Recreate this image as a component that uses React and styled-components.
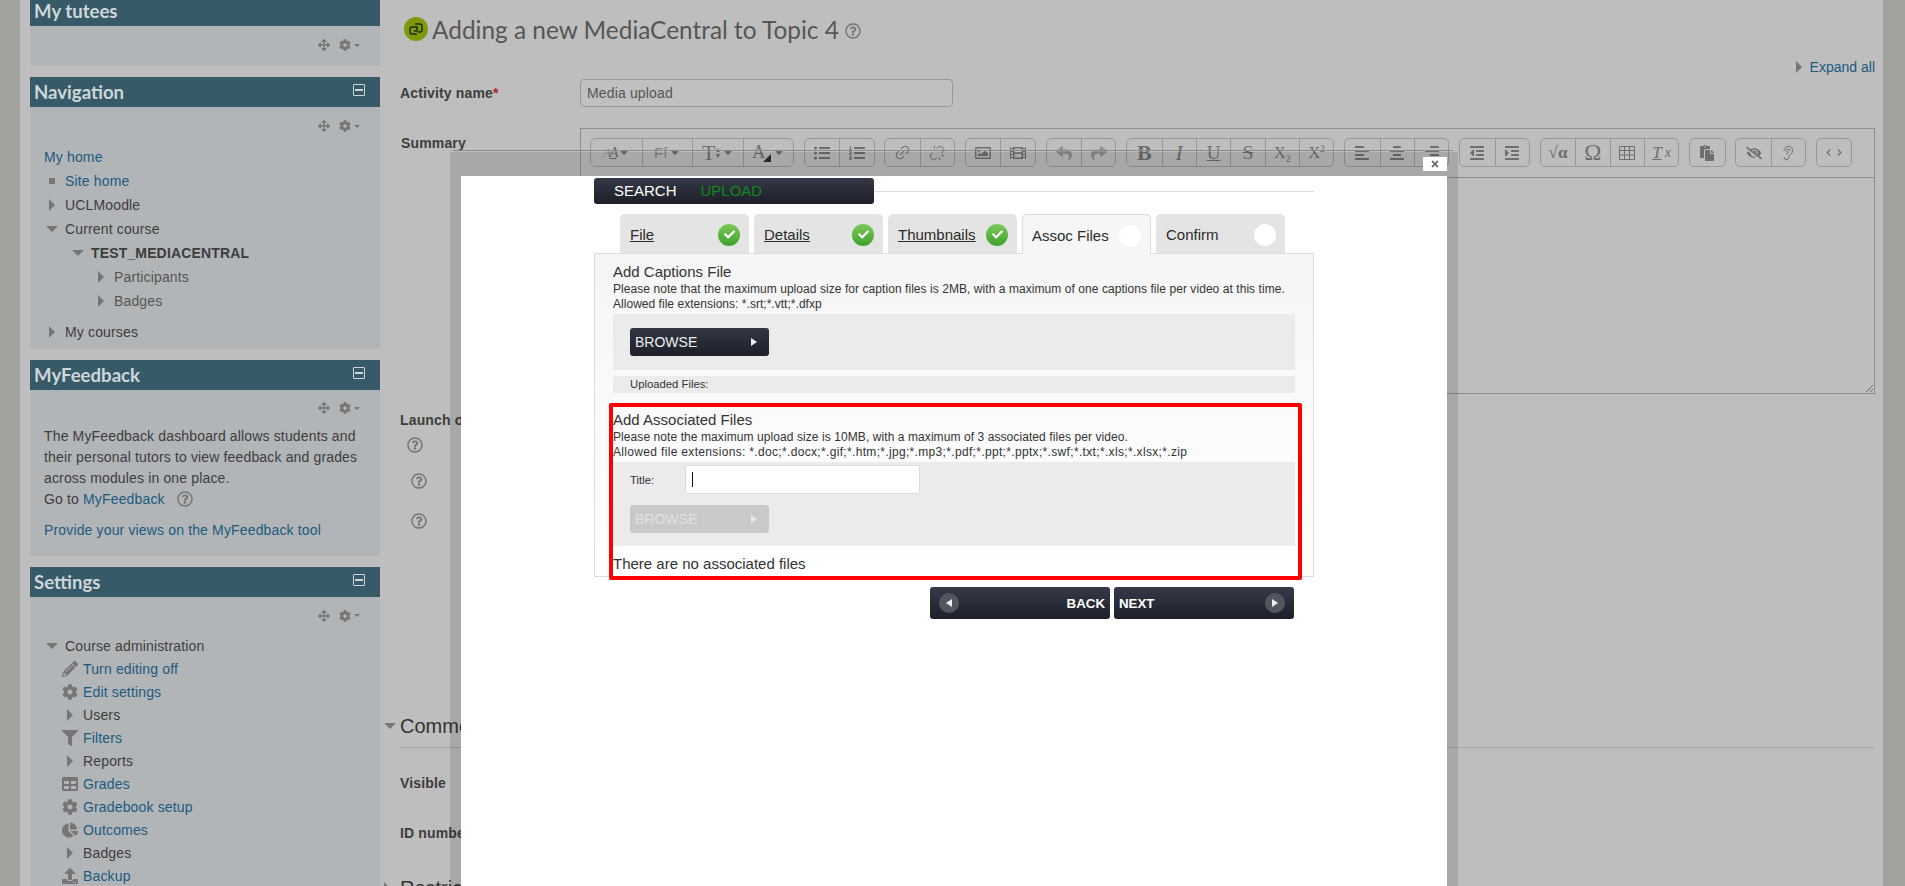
import React from "react";
import styled, { createGlobalStyle } from "styled-components";
import {
  FaArrowsAlt, FaCog, FaPencilAlt, FaFilter, FaTable, FaUpload, FaRegQuestionCircle,
  FaRegImage, FaFilm, FaReply, FaShare, FaListUl, FaListOl, FaAlignLeft,
  FaAlignCenter, FaAlignRight, FaOutdent, FaIndent, FaPaste, FaEyeSlash, FaCheck,
  FaTimes, FaChartPie,
} from "react-icons/fa";
import { Ear, Link2, Unlink, ChevronLeft, ChevronRight } from "lucide-react";

const Global = createGlobalStyle`
  html, body { margin: 0; padding: 0; height: 886px; overflow: hidden; background: #bebebe; }
  * { box-sizing: border-box; }
  body { font-family: "Liberation Sans", Arial, sans-serif; font-size: 14px; letter-spacing: .15px; color: #3d3d3d; }
`;

const Page = styled.div`
  position: relative; display: flex; width: 1905px; height: 886px; overflow: hidden; background: #bebebe;
`;
const Gutter = styled.div`
  flex: 0 0 ${p => p.$w}px; background: #a2a39c;
`;
const Content = styled.div`
  flex: 1; display: flex; padding: 0 8px 0 10px; min-width: 0;
`;
const Sidebar = styled.aside`
  flex: 0 0 350px; margin-top: -4px; display: flex; flex-direction: column; gap: 11px;
`;
const Block = styled.section`background: #b2b5b7; flex: ${p => p.$grow ? 1 : "none"}; height: ${p => p.$h ? p.$h + "px" : "auto"};`;
const BlockHead = styled.header`
  height: ${p => p.$h || 30}px; background: #375a68; color: #cfd6d8; display: flex; align-items: center; justify-content: space-between;
  padding: 0 15px 0 4px; font-family: "Lato", "Open Sans", sans-serif; font-weight: 700; font-size: 18.6px; letter-spacing: 0;
`;
const MinBox = styled.span`
  width: 12px; height: 12px; border: 1px solid #cfd6d8; border-radius: 1px; display: flex; align-items: center; justify-content: center; margin-top: -4px;
  &::after { content: ""; width: 8px; height: 2px; background: #cfd6d8; }
`;
const Controls = styled.div`
  height: ${p => p.$h || 38}px; display: flex; align-items: center; justify-content: flex-end; gap: 9px; padding-right: 20px; color: #767676;
`;
const Caret = styled.span`
  margin-left: -6px; border-left: 3px solid transparent; border-right: 3px solid transparent; border-top: 3px solid #767676;
`;
const TreeRow = styled.div`
  display: flex; align-items: center; height: ${p => p.$h || 24}px; padding-left: ${p => p.$indent}px; font-weight: ${p => p.$bold ? 700 : 400};
  margin-top: ${p => p.$mt || 0}px; color: ${p => p.$link ? "#1c5a80" : p.$dim ? "#555" : "#3d3d3d"};
`;
const IconSlot = styled.span`
  flex: 0 0 ${p => p.$w || 21}px; display: flex; align-items: center; justify-content: center; margin-right: ${p => p.$mr || 0}px;
  padding-right: ${p => p.$pr || 0}px; color: #767676;
`;
const TriRight = styled.span`
  border-top: 6px solid transparent; border-bottom: 6px solid transparent; border-left: 6px solid #767676;
`;
const TriDown = styled.span`
  border-left: 6px solid transparent; border-right: 6px solid transparent; border-top: 6px solid #767676;
`;
const Bullet = styled.span`width: 6px; height: 6px; background: #767676;`;
const Paragraph = styled.div`
  padding: 0 14px; line-height: 21px; color: #3d3d3d;
`;
const Link = styled.span`color: #1c5a80;`;
const ParaGap = styled.div`margin-top: 10px; padding: 0 14px; line-height: 20px; color: #1c5a80;`;

const Main = styled.main`
  flex: 1; margin-left: 20px; min-width: 0; display: flex; flex-direction: column;
  & > * { flex-shrink: 0; }
`;
const TitleRow = styled.div`
  display: flex; align-items: center; margin-top: 15px; height: 28px; padding-left: 4px; gap: 4px; color: #565656;
  font-family: "Lato", "Open Sans", sans-serif; font-size: 24.4px; letter-spacing: 0; white-space: nowrap;
`;
const ExpandRow = styled.div`
  margin-top: 14px; height: 20px; display: flex; align-items: center; justify-content: flex-end; gap: 8px; padding-right: 0; color: #1c5a80; font-size: 14px; letter-spacing: 0;
`;
const FieldRow = styled.div`display: flex; margin-top: ${p => p.$mt || 0}px;`;
const FieldLabel = styled.label`
  flex: 0 0 180px; font-weight: 700; padding: ${p => p.$pad || "6px 0 0 0"}; color: #3d3d3d;
  b { color: #a9252b; }
`;
const TextInput = styled.div`
  width: 373px; height: 28px; border: 1px solid #989898; border-radius: 4px; padding: 0 6px; line-height: 26px; color: #555; background: #c0c0c0;
`;
const Editor = styled.div`
  flex: 1; height: 266px; border: 1px solid #8e8e8e; position: relative;
`;
const Toolbar = styled.div`
  height: 49px; border-bottom: 1px solid #8e8e8e; display: flex; gap: 9.8px; padding: 9px 0 0 9px;
`;
const BtnGroup = styled.div`
  display: flex; height: 29px; border: 1px solid #989898; border-radius: 5px;
`;
const ToolBtn = styled.span`
  width: ${p => p.$w || 34.4}px; display: flex; align-items: center; justify-content: center; gap: 3px; color: #6e6e6e; font-size: 16px; letter-spacing: 0;
  font-family: "Liberation Serif", serif; font-weight: ${p => p.$bold ? 700 : 400}; font-style: ${p => p.$italic ? "italic" : "normal"};
  text-decoration: ${p => p.$deco || "none"};
  & + & { border-left: 1px solid #989898; }
  sub, sup { font-size: 10px; line-height: 0; }
`;
const SmallCaret = styled.span`
  border-left: 5px solid transparent; border-right: 5px solid transparent; border-top: 5px solid #6e6e6e;
`;
const SansGlyph = styled.span`font-family: "Liberation Sans", sans-serif; font-size: ${p => p.$s}px; color: #858585;`;
const SerifGlyph = styled.span`font-size: ${p => p.$s}px; font-style: ${p => p.$i ? "italic" : "normal"}; text-decoration: ${p => p.$u ? "underline" : "none"}; color: ${p => p.$c || "#6e6e6e"};`;
const GlyphStack = styled.span`display: flex; align-items: flex-end; letter-spacing: -2px;`;
const ArrowStack = styled.span`display: flex; flex-direction: column; gap: 2px; margin-left: -2px;`;
const UpTip = styled.span`border-left: 2.5px solid transparent; border-right: 2.5px solid transparent; border-bottom: 4px solid #6e6e6e;`;
const DownTip = styled.span`border-left: 2.5px solid transparent; border-right: 2.5px solid transparent; border-top: 4px solid #6e6e6e;`;
const CornerTip = styled.span`
  width: 0; height: 0; margin: 10px 0 0 -5px; border-left: 8px solid transparent; border-bottom: 8px solid #2c2c2c;
`;
const ResizeGrip = styled.svg`position: absolute; right: 1px; bottom: 1px;`;
const LaunchLabel = styled.div`margin-top: 18px; height: 16px; font-weight: 700;`;
const HelpSlot = styled.div`
  margin: ${p => p.$mt}px 0 0 ${p => p.$ml}px; height: 16px; color: #767676; display: flex;
`;
const SectionHead = styled.div`
  margin-top: ${p => p.$mt}px; height: 24px; display: flex; align-items: center; font-size: 20px; letter-spacing: 0; color: #333; position: relative; white-space: nowrap;
`;
const SectionTri = styled.span`position: absolute; left: -16px; display: flex;`;
const SectionRule = styled.div`margin-top: 9px; height: 1px; background: #a6a6a6;`;
const PlainLabel = styled.div`margin-top: ${p => p.$mt}px; height: 16px; font-weight: 700; white-space: nowrap;`;

/* modal overlays */
const ModalLine = styled.div`position: absolute; left: 453px; top: 150px; width: 1000px; height: 1px; background: #8a8a8a;`;
const ModalShadow = styled.div`position: absolute; left: 450px; top: 152px; width: 1008px; height: 734px; background: rgba(0,0,0,.115);`;
const Close = styled.div`
  position: absolute; left: 1423px; top: 157px; width: 24px; height: 14px; background: #fff; display: flex; align-items: center; justify-content: center; color: #6a6a6a;
`;
const Modal = styled.div`
  position: absolute; left: 461px; top: 176px; width: 986px; height: 710px; background: #fff; padding: 2px 133px 0; color: #333; letter-spacing: 0;
`;
const Stage = styled.div`width: 720px;`;
const TopRow = styled.div`display: flex; height: 26px;`;
const ModeBar = styled.div`
  flex: 0 0 280px; border-radius: 3px; background: linear-gradient(#353846, #1d2029); display: flex; align-items: center; padding: 0 0 2px 20px; gap: 24px; font-size: 15px; color: #fff;
`;
const ModeGreen = styled.span`color: #0c8a16;`;
const TopRule = styled.div`flex: 1; height: 1px; margin-top: 13px; background: #dcdcdc;`;
const Tabs = styled.div`display: flex; gap: 5px; margin-top: 10px; padding-left: 26px; height: 39px; position: relative; z-index: 1;`;
const Tab = styled.div`
  width: 129px; height: ${p => p.$active ? 40 : 39}px; border-radius: 5px 5px 0 0; display: flex; align-items: center; justify-content: space-between;
  padding: 2px 9px 0 ${p => p.$active ? 9 : 10}px; font-size: 15px; color: #2b2b2b;
  background: ${p => p.$active ? "#f6f6f6" : "#e4e4e4"}; border: ${p => p.$active ? "1px solid #dcdcdc" : "none"}; border-bottom: none;
  span:first-child { text-decoration: ${p => p.$done ? "underline" : "none"}; }
`;
const Tick = styled.span`
  width: 22px; height: 22px; border-radius: 50%; display: flex; align-items: center; justify-content: center; color: #fff; background: linear-gradient(#7cc957, #3fa12e);
`;
const Empty = styled.span`width: 22px; height: 22px; border-radius: 50%; background: #fff;`;
const Panel = styled.div`
  height: 324px; border: 1px solid #dcdcdc; background: linear-gradient(#f5f5f5, #fff); padding: 8px 18px 0;
`;
const Heading = styled.div`font-size: 15px; line-height: 20px; color: #333; white-space: nowrap;`;
const Note = styled.div`font-size: 12px; line-height: 15px; color: #333; white-space: nowrap; letter-spacing: ${p => p.$ls || 0}px;`;
const Band = styled.div`
  background: #ebebeb; margin-top: ${p => p.$mt || 0}px; height: ${p => p.$h}px; padding: ${p => p.$pad}; margin-right: ${p => p.$mr || 0}px;
`;
const BrowseBtn = styled.div`
  width: 139px; height: 28px; border-radius: 3px; display: flex; align-items: center; justify-content: space-between; padding: 0 12px 0 5px; font-size: 14px;
  color: ${p => p.$off ? "#e0e0e0" : "#eee"}; background: ${p => p.$off ? "#c9c9cb" : "linear-gradient(#333644, #1d2029)"}; margin-top: ${p => p.$mt || 0}px;
`;
const Play = styled.span`
  border-top: 4px solid transparent; border-bottom: 4px solid transparent; border-left: 6px solid ${p => p.$off ? "#e8e8e8" : "#eee"};
`;
const UploadedLabel = styled.div`font-size: 11.3px; line-height: 17px; padding-left: 17px; color: #333;`;
const RedBox = styled.div`
  margin: 10px -7px 0 -4px; height: 177px; border: 4px solid #f00; border-radius: 2px; padding-top: 3px;
`;
const TitleField = styled.div`display: flex; align-items: center; font-size: 11.3px; color: #333;`;
const TitleLabel = styled.span`flex: 0 0 55px;`;
const TitleBox = styled.div`
  width: 235px; height: 29px; background: #fff; border: 1px solid #dcdcdc; border-radius: 2px; display: flex; align-items: center; padding-left: 6px;
`;
const CursorBar = styled.span`width: 1px; height: 15px; background: #111;`;
const NoFiles = styled.div`font-size: 15px; line-height: 20px; margin-top: 8px; color: #333;`;
const NavRow = styled.div`display: flex; justify-content: flex-end; gap: 4px; padding-right: 20px; margin-top: 10px;`;
const NavBtn = styled.div`
  width: 180px; height: 32px; border-radius: 3px; background: linear-gradient(#363948, #1d2029); color: #fff; font-weight: 700; font-size: 13.3px;
  display: flex; align-items: center; justify-content: space-between; padding: ${p => p.$left ? "0 5px 0 9px" : "0 9px 0 5px"};
`;
const Dot = styled.span`
  width: 20px; height: 20px; border-radius: 50%; background: #54565f; display: flex; align-items: center; justify-content: center;
`;
const PlayL = styled.span`border-top: 4px solid transparent; border-bottom: 4px solid transparent; border-right: 6px solid #eee;`;

const Help = ({ size = 16 }) => <FaRegQuestionCircle size={size} />;
const Ctl = ({ h }) => (
  <Controls $h={h}>
    <FaArrowsAlt size={12} /><FaCog size={12} /><Caret />
  </Controls>
);
const Row = ({ indent, icon, children, ...r }) => (
  <TreeRow $indent={indent} {...r}><IconSlot $pr={5}>{icon}</IconSlot>{children}</TreeRow>
);

const nav = [
  [14, <Bullet />, "Site home", { $link: true }],
  [14, <TriRight />, "UCLMoodle", {}],
  [14, <TriDown />, "Current course", {}],
  [40, <TriDown />, "TEST_MEDIACENTRAL", { $bold: true }],
  [63, <TriRight />, "Participants", { $dim: true }],
  [63, <TriRight />, "Badges", { $dim: true }],
];
const I = 16;
const settings = [
  [<FaPencilAlt size={I} />, "Turn editing off", true],
  [<FaCog size={I} />, "Edit settings", true],
  [<TriRight />, "Users", false],
  [<FaFilter size={I} />, "Filters", true],
  [<TriRight />, "Reports", false],
  [<FaTable size={I} />, "Grades", true],
  [<FaCog size={I} />, "Gradebook setup", true],
  [<FaChartPie size={I} />, "Outcomes", true],
  [<TriRight />, "Badges", false],
  [<FaUpload size={I} />, "Backup", true],
];
const helpSlots = [[9, 7], [20, 11], [24, 11]];

const S = 16;
const GridIcon = () => (
  <svg width="16" height="16" viewBox="0 0 16 16" fill="none" stroke="#6e6e6e" strokeWidth="1">
    <path d="M.5 1.5h15v13H.5zM.5 5.5h15M.5 10h15M5.5 1.5v13M10.5 1.5v13" />
  </svg>
);
const groups = [
  [
    <ToolBtn $w={50.5} key="a">
      <GlyphStack><SerifGlyph $s={13} $i $c="#8a8a8a">A</SerifGlyph><SerifGlyph $s={15} $i $u>A</SerifGlyph></GlyphStack><SmallCaret />
    </ToolBtn>,
    <ToolBtn $w={50.5} key="b"><SansGlyph $s={15}>Ff</SansGlyph><SmallCaret /></ToolBtn>,
    <ToolBtn $w={50.5} key="c"><SerifGlyph $s={22}>T</SerifGlyph><ArrowStack><UpTip /><DownTip /></ArrowStack><SmallCaret /></ToolBtn>,
    <ToolBtn $w={50.5} key="d"><SerifGlyph $s={18}>A</SerifGlyph><CornerTip /><SmallCaret /></ToolBtn>,
  ],
  [<FaListUl size={S} />, <FaListOl size={S} />],
  [<Link2 size={17} strokeWidth={1.5} style={{ transform: "rotate(-45deg)" }} />, <Unlink size={16} strokeWidth={1.5} />],
  [<FaRegImage size={16} />, <FaFilm size={S} />],
  [<FaReply size={S} color="#8f8f8f" />, <FaShare size={S} color="#8f8f8f" />],
  [
    <ToolBtn key="b" $bold style={{ fontSize: 22 }}>B</ToolBtn>,
    <ToolBtn key="i" $italic style={{ fontSize: 22 }}>I</ToolBtn>,
    <ToolBtn key="u" $deco="underline" style={{ fontSize: 19 }}>U</ToolBtn>,
    <ToolBtn key="s" $deco="line-through" style={{ fontSize: 19 }}>S</ToolBtn>,
    <ToolBtn key="x2"><span>X<sub>2</sub></span></ToolBtn>,
    <ToolBtn key="x3"><span>X<sup>2</sup></span></ToolBtn>,
  ],
  [<FaAlignLeft size={S} />, <FaAlignCenter size={S} />, <FaAlignRight size={S} />],
  [<FaOutdent size={S} />, <FaIndent size={S} />],
  [
    <ToolBtn key="r" $bold style={{ fontSize: 17 }}>√α</ToolBtn>,
    <ToolBtn key="o" style={{ fontSize: 23 }}>Ω</ToolBtn>,
    <GridIcon key="t" />,
    <ToolBtn key="x" $italic style={{ fontSize: 17 }}><u>T</u><small>x</small></ToolBtn>,
  ],
  [<FaPaste size={S} />],
  [<FaEyeSlash size={S} />, <Ear size={S} strokeWidth={1.5} />],
  [<ToolBtn key="c" style={{ gap: 0 }}><ChevronLeft size={11} strokeWidth={2.5} /><ChevronRight size={11} strokeWidth={2.5} /></ToolBtn>],
];
const Group = ({ items }) => (
  <BtnGroup>
    {items.map((it, i) =>
      it.type === ToolBtn ? React.cloneElement(it, { key: i }) : <ToolBtn key={i}>{it}</ToolBtn>
    )}
  </BtnGroup>
);
const tabs = [
  ["File", true], ["Details", true], ["Thumbnails", true], ["Assoc Files", false, true], ["Confirm", false],
];

export default function App() {
  return (
    <Page>
      <Global />
      <Gutter $w={20} />
      <Content>
        <Sidebar>
          <Block>
            <BlockHead $h={30}>My tutees</BlockHead>
            <Ctl />
            <div style={{ height: 2 }} />
          </Block>
          <Block $h={272}>
            <BlockHead>Navigation<MinBox /></BlockHead>
            <Ctl />
            <TreeRow $indent={14} $link $h={24} $mt={0}>My home</TreeRow>
            {nav.map(([ind, ic, t, o]) => <Row key={t} indent={ind} icon={ic} {...o}>{t}</Row>)}
            <Row indent={14} icon={<TriRight />} $mt={7}>My courses</Row>
          </Block>
          <Block $h={196}>
            <BlockHead>MyFeedback<MinBox /></BlockHead>
            <Ctl h={36} />
            <Paragraph>
              The MyFeedback dashboard allows students and<br />
              their personal tutors to view feedback and grades<br />
              across modules in one place.<br />
              Go to <Link>MyFeedback</Link>&nbsp;&nbsp; <FaRegQuestionCircle size={16} color="#767676" style={{ verticalAlign: -3 }} />
            </Paragraph>
            <ParaGap>Provide your views on the MyFeedback tool</ParaGap>
          </Block>
          <Block $grow>
            <BlockHead>Settings<MinBox /></BlockHead>
            <Ctl h={37} />
            <Row indent={14} icon={<TriDown />} $h={23}>Course administration</Row>
            {settings.map(([ic, t, l]) => (
              <TreeRow key={t + l} $indent={32} $h={23} $link={l}>
                <IconSlot $w={16} $mr={5}>{ic}</IconSlot>{t}
              </TreeRow>
            ))}
          </Block>
        </Sidebar>
        <Main>
          <TitleRow>
            <svg width="24" height="24" viewBox="0 0 24 24">
              <circle cx="12" cy="12" r="12" fill="#7c9a0a" />
              <path d="M11 7h5a2 2 0 0 1 2 2v4a2 2 0 0 1-2 2h-2M13 17H8a2 2 0 0 1-2-2v-3a2 2 0 0 1 2-2h5v4h-3" fill="none" stroke="#1f2a12" strokeWidth="1.5" />
            </svg>
            <span>Adding a new MediaCentral to Topic 4</span>
            <span style={{ display: "flex", color: "#767676", marginLeft: 2, marginTop: 3 }}><Help /></span>
          </TitleRow>
          <ExpandRow><TriRight />Expand all</ExpandRow>
          <FieldRow $mt={2}>
            <FieldLabel>Activity name<b>*</b></FieldLabel>
            <TextInput>Media upload</TextInput>
          </FieldRow>
          <FieldRow $mt={21}>
            <FieldLabel $pad="7px 0 0 1px">Summary</FieldLabel>
            <Editor>
              <Toolbar>{groups.map((g, i) => <Group key={i} items={g} />)}</Toolbar>
              <ResizeGrip width="8" height="8" viewBox="0 0 8 8">
                <path d="M1 8L8 1M5 8L8 5" stroke="#6a6a6a" strokeWidth="1" />
              </ResizeGrip>
            </Editor>
          </FieldRow>
          <LaunchLabel>Launch options</LaunchLabel>
          {helpSlots.map(([mt, ml], i) => <HelpSlot key={i} $mt={mt} $ml={ml}><Help /></HelpSlot>)}
          <SectionHead $mt={185}>
            <SectionTri><TriDown /></SectionTri>Common module settings
          </SectionHead>
          <SectionRule />
          <PlainLabel $mt={27}>Visible</PlainLabel>
          <PlainLabel $mt={34}>ID number</PlainLabel>
          <SectionHead $mt={35}>
            <SectionTri><TriRight /></SectionTri>Restrict access
          </SectionHead>
        </Main>
      </Content>
      <Gutter $w={22} />

      <ModalLine />
      <ModalShadow />
      <Close><FaTimes size={10} /></Close>
      <Modal>
        <Stage>
          <TopRow>
            <ModeBar><span>SEARCH</span><ModeGreen>UPLOAD</ModeGreen></ModeBar>
            <TopRule />
          </TopRow>
          <Tabs>
            {tabs.map(([t, done, active]) => (
              <Tab key={t} $done={done} $active={active}>
                <span>{t}</span>
                {done ? <Tick><FaCheck size={11} /></Tick> : <Empty />}
              </Tab>
            ))}
          </Tabs>
          <Panel>
            <Heading>Add Captions File</Heading>
            <Note $ls={0.06}>Please note that the maximum upload size for caption files is 2MB, with a maximum of one captions file per video at this time.</Note>
            <Note $ls={0.03}>Allowed file extensions: *.srt;*.vtt;*.dfxp</Note>
            <Band $mt={2} $h={56} $pad="14px 17px">
              <BrowseBtn>BROWSE<Play /></BrowseBtn>
            </Band>
            <Band $mt={6} $h={17} $pad="0">
              <UploadedLabel>Uploaded Files:</UploadedLabel>
            </Band>
            <RedBox>
              <Heading>Add Associated Files</Heading>
              <Note $ls={0.08}>Please note the maximum upload size is 10MB, with a maximum of 3 associated files per video.</Note>
              <Note $ls={0.33}>Allowed file extensions: *.doc;*.docx;*.gif;*.htm;*.jpg;*.mp3;*.pdf;*.ppt;*.pptx;*.swf;*.txt;*.xls;*.xlsx;*.zip</Note>
              <Band $mt={2} $h={84} $mr={3} $pad="3px 17px">
                <TitleField>
                  <TitleLabel>Title:</TitleLabel>
                  <TitleBox><CursorBar /></TitleBox>
                </TitleField>
                <BrowseBtn $off $mt={11}>BROWSE<Play $off /></BrowseBtn>
              </Band>
              <NoFiles>There are no associated files</NoFiles>
            </RedBox>
          </Panel>
          <NavRow>
            <NavBtn $left>
              <Dot><PlayL /></Dot>
              <span>BACK</span>
            </NavBtn>
            <NavBtn>
              <span>NEXT</span>
              <Dot><Play /></Dot>
            </NavBtn>
          </NavRow>
        </Stage>
      </Modal>
    </Page>
  );
}
